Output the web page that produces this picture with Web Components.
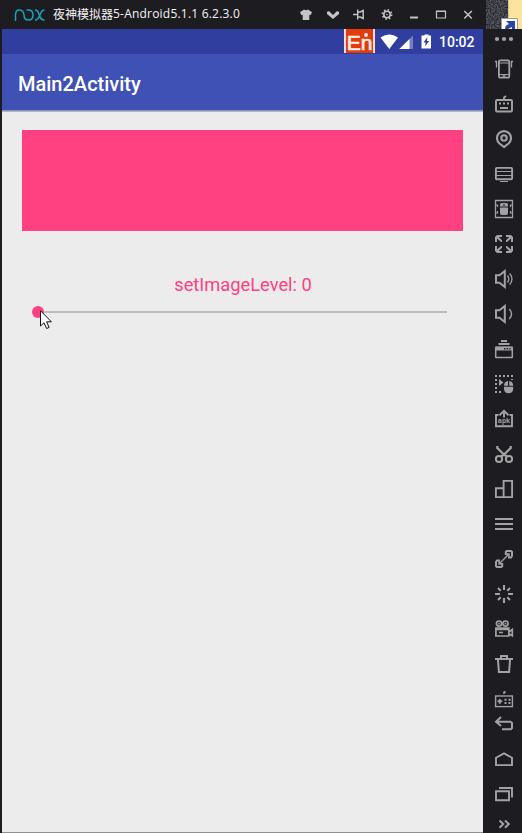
<!DOCTYPE html>
<html lang="zh"><head><meta charset="utf-8"><title>Main2Activity</title>
<style>html,body{margin:0;height:100%;background:#1d1c21;overflow:hidden}</style></head>
<body><emulator-window></emulator-window>
<script>
const define=(name,html)=>customElements.define(name,class extends HTMLElement{
  constructor(){super();this.attachShadow({mode:'open'}).innerHTML=html}
});

const ICONS={
dots:'<g class="f"><circle cx="3" cy="10" r="2.1"/><circle cx="10" cy="10" r="2.1"/><circle cx="17" cy="10" r="2.1"/></g>',
shake:'<rect x="4.900" y="1.300" width="10.400" height="17.400" rx="1.500" stroke-width="1.800"/><path d="M5 4h10M5 15.500h10" stroke-width="1"/><path d="M8.500 17h3M1 2.500h1.500v6M19 2.500h-1.500v6" stroke-width="1.300"/>',
keyboard:'<rect x="2" y="6" width="16" height="11.500" rx="1" stroke-width="1.900"/><path d="M10 6V3.500l2-1.500M5 9.500h2M9 9.500h2M13 9.500h2M6 14h8" stroke-width="1.800"/>',
pin:'<path d="M10 18 5.500 14.500A7 7 0 1 1 14.500 14.500Z" stroke-width="2.200"/><circle cx="10" cy="9" r="2.700" stroke-width="2.100"/>',
monitor:'<rect x="1.900" y="3.900" width="16.200" height="11.400" rx="1" stroke-width="1.900"/><path d="M2 7.500h16M2 11.500h16M6 17.500h8" stroke-width="1.200"/>',
mouse:'<path d="M1.500 1.500h17v17h-17z" stroke-width="1.300"/><path class="f" d="M7.500 4h5q1.500 0 1.500 2v1.500H6V6q0-2 1.500-2zM6 8.500h8V14q0 2-2 2H8q-2 0-2-2z"/><path d="M9 6h2" stroke="#1d1c21" stroke-width="1"/><path d="M2 6h1.500v2M2 14h1.500v-2M18 6h-1.500v2M18 14h-1.500v-2" stroke-width="1.200"/>',
full:'<path class="f" d="M3 1h5v2H4.800L8 6.200V8L7 8 3 4.500V8H1V3zM17 1h-5v2h3.200L12 6.200V8h1l4-3.500V8h2V3zM3 19h5v-2H4.800L8 13.800V12H7l-4 3.500V12H1v5zM17 19h-5v-2h3.200L12 13.800V12h1l4 3.500V12h2v5z"/>',
loud:'<path d="M2 6.200h3.500L10.800 2v16l-5.300-4.200H2z" stroke-width="2"/><path d="M13.500 6.500q2.500 3.500 0 7M15.700 4.500q4.500 5.500 0 11" stroke-width="1.300"/>',
quiet:'<path d="M2 6.200h3.500L10.800 2v16l-5.300-4.200H2z" stroke-width="2"/><path d="M15.300 5q4.500 5 0 10" stroke-width="1.400"/>',
windows:'<path d="M7 2h6M4.500 5h11" stroke-width="1.900"/><rect x="1.700" y="8.200" width="16.600" height="10.300" rx=".5" stroke-width="1.500"/><path class="f" d="M1.500 7.700h17v3.800h-17z"/><path d="M10 9.700h7" stroke="#1d1c21" stroke-width="1.400" stroke-dasharray="1.400 1.200"/>',
record:'<path d="M1 2h18M2 5v14M1 18h8M18 5v1" stroke-width="2" stroke-dasharray="2 2"/><path class="f" d="M5 5l4.500 3.500L5 12zM14 7v4.700h-4q0-4 4-4.700zM15.200 7q4 .7 4 4.700h-4zM10 12.700h9.200v2.300q-.5 4.300-4.600 4.300T10 15z"/>',
apk:'<path d="M4.500 6H2v11.300h16V6h-2.500M10 8.500V2M5.500 6.200 10 1.800l4.500 4.400" stroke-width="1.900"/><text x="3.700" y="14" textLength="12.600" lengthAdjust="spacingAndGlyphs">apk</text>',
cut:'<path d="M3.300 2v2L10 10.500 16.700 4V2M10 10.500l-3.300 2.300M10 10.500l3.300 2.300" stroke-width="2.300"/><circle cx="5" cy="15" r="3.100" stroke-width="2"/><circle cx="15" cy="15" r="3.100" stroke-width="2"/>',
rotate:'<path d="M9.600 1.900h8.500v16.200H9.600zM9.600 9.200H1.900v8.900h7.700" stroke-width="1.900"/>',
menu:'<path d="M1 5h18M1 10h18M1 15h18" stroke-width="1.900"/>',
link:'<path d="M11.800 6V2.800L12.800 2H17l1 1v4l-1 1.500h-3M8.200 14v3.200l-1 .8H3l-1-1v-4l1-1.500h3" stroke-width="2"/><path d="M5 15 15 5M5 12v3h3M12 5h3v3" stroke-width="1.400"/>',
burst:'<path d="M10 1v5M10 14v5M1 10h5M14 10h5M4 4l2.700 2.700M13.300 13.300 16 16M4 16l2.700-2.700M13.300 6.700 16 4" stroke-width="2.100"/>',
video:'<circle cx="5" cy="4.600" r="2.600"/><circle cx="11.500" cy="4.600" r="2.600"/><path class="f" d="M4.200 3.800h1.600v1.600H4.200zM10.700 3.800h1.600v1.600h-1.600z"/><path d="M1.900 9h12.900v8H1.900zM2 10.300h12.500M5 13.500h4M14.800 13l3.500-2.500v6.300l-3.500-2" stroke-width="1.700"/>',
trash:'<path d="M1 4.900h18M7 4V1.900h6V4M4 6l.9 12h10.200L16 6" stroke-width="2"/>',
gamepad:'<rect x="1.600" y="7" width="16.800" height="10.600" stroke-width="1.400"/><path d="M10 4.800V3.500l1.500-1M3.500 12.200h4.700M5.800 10v4.700M10.500 10.700h2M14.500 10.700h2M10.500 14h2M14.500 14h2" stroke-width="1.900"/>',
back:'<path d="M7 4 2 8.800 7 13M2 8.800h14.500L18 10v5l-1.200 1.200H8" stroke-width="2"/>',
home:'<path d="M2 16.100V8.700L10 4.300l8 4.400v7.400z" stroke-width="1.900"/>',
recent:'<path d="M2 7.300h13v8.900H2zM5 4h13v9.500" stroke-width="1.900"/>',
more:'<path d="m5.500 6.500 3.800 3.500-3.800 3.700M11 6.500l3.800 3.500-3.800 3.700" stroke-width="2"/>',
shirt:'<path class="f" d="M8 4.500q2 1.500 4 0l4 2.800-1.500 3-1.200-.5V15H6.700V9.800l-1.200.5L4 7.300z"/>',
down:'<path class="f" d="M4 7q1-1 2.500-.5L10 10l3.500-3.500Q15 6 16 7v2l-6 5-6-5z"/>',
tack:'<path d="M3 9.500H7M7.700 4.500v10M7.700 7h2.500l3-1.500v8l-3-1.500H7.700" stroke-width="1.400"/>',
gear:'<circle cx="10" cy="9.500" r="3.200"/><circle cx="10" cy="9.500" r="4.600" stroke-width="1.700" stroke-dasharray="1.500 2.113"/><circle class="f" cx="10" cy="9.500" r=".8"/>',
min:'<path d="M6 12.500h8" stroke-width="2"/>',
max:'<path d="M5.500 6h9v7h-9zM5 6.500h10" stroke-width="1.200"/>',
close:'<path d="m6.300 6 7.500 7.500M13.800 6l-7.500 7.500" stroke-width="1.500"/>'
};
customElements.define('ui-icon',class extends HTMLElement{
  constructor(){super();this.attachShadow({mode:'open'})}
  connectedCallback(){this.shadowRoot.innerHTML=`<style>:host{display:block;width:20px;height:20px;flex:none}
  svg{display:block;fill:none;stroke:currentColor;stroke-width:1.6}.f{fill:currentColor;stroke:none}
  text{fill:currentColor;stroke:none;font:bold 8px "Liberation Mono",monospace}</style>
  <svg width="20" height="20" viewBox="0 0 20 20">${ICONS[this.getAttribute('name')]}</svg>`}
});

define('title-bar',`<style>:host{display:flex;align-items:center;height:29px;width:486px;box-sizing:border-box;padding-left:14px;background:#1d1c21;color:#c4c4c6}
.logo{flex:none;width:32px;height:14px;margin-right:7px}
.name{color:#f4f4f4;font:12px/20px "Open Sans","Noto Sans CJK SC",sans-serif;white-space:nowrap;width:243px;display:flex;align-items:center;margin-top:-1px}
.cn{font-family:"Noto Sans CJK SC",sans-serif}.en{letter-spacing:.21px}
.tools{display:flex;gap:7px}</style>
<svg class="logo" viewBox="0 0 32 14" fill="none" stroke="#13a5bd" stroke-width="1.500"><path d="M1.500 13V7Q1.500 2 5.500 2T10 7q0 5 4.500 5T19 7 14.500 2h-2M21 2q2.500 0 3.300 2.500L26 9q1 3 4.500 3M30.500 2Q28 2 27 4.500L25 9q-1.300 3-4 3"/></svg>
<div class="name"><span class="cn">夜神模拟器</span><span class="en">5-Android5.1.1 6.2.3.0</span></div>
<div class="tools"><ui-icon name="shirt"></ui-icon><ui-icon name="down"></ui-icon><ui-icon name="tack"></ui-icon><ui-icon name="gear"></ui-icon><ui-icon name="min"></ui-icon><ui-icon name="max"></ui-icon><ui-icon name="close"></ui-icon></div>`);

define('desktop-corner',`<style>:host{display:block;width:36px;height:29px}svg{display:block}</style>
<svg width="36" height="29"><defs><filter id="n" x="0" y="0" width="1" height="1" color-interpolation-filters="sRGB"><feTurbulence type="fractalNoise" baseFrequency=".7" numOctaves="2" seed="4"/><feColorMatrix values=".5 0 0 0 0 .5 0 0 0 0 .5 0 0 0 .03 0 0 0 0 1"/></filter></defs>
<path filter="url(#n)" d="M0 0h36v29H0z"/><path fill="#fbe3a0" d="M22 0h14v29H22z"/><path fill="#e4c474" d="M22 0h1v18h-1z"/><path fill="#fff" stroke="#9a9aa0" d="M15.500 18.500h16V30h-16z"/><path fill="#2c45a5" d="M20 21h9v8h-3v-2l-4 2h-3q0-4 4-5z"/></svg>`);

define('status-bar',`<style>:host{display:flex;height:25px;background:#303f9f;color:#fff;justify-content:flex-end;align-items:center;padding-right:8px}
.ime{width:27px;height:24px;border:solid #f3dcd6;border-width:0 2px;background:#e23c0a;font:21px/28px "Liberation Sans",sans-serif;-webkit-text-stroke:.7px #f6ece8;color:#f6ece8;text-align:center;align-self:flex-start;overflow:hidden;margin-right:2px;position:relative}
.ime i{position:absolute;left:18px;top:4px;width:4px;height:4px;border-radius:2px;background:#f6ece8}
svg{display:block}time{font:500 14px/25px Roboto,sans-serif;margin-left:6px;width:36px;white-space:nowrap;padding-top:1px}</style>
<div class="ime">En<i></i></div><svg width="56" height="25" viewBox="0 0 56 25"><path fill="#fff" d="M3.500 8.500q8.700-6 17.500 0L12.300 20z"/><path fill="#7480c2" d="M36 6.500V20H22z"/><path fill="#fff" d="M32.500 10v10H22.500z"/><path fill="#fff" d="M47.500 5.500h4V6.500H54v13h-9.500v-13h3z"/><path fill="#303f9f" d="m50.500 8-4 5.500h2.300l-.8 4 4.200-5.500h-2.300z"/></svg><time>10:02</time>`);

define('app-bar',`<style>:host{display:flex;align-items:center;height:58px;padding:3px 16px 0;box-sizing:border-box;background:#3f51b5;color:#fff;font:500 20px/24px Roboto,sans-serif;border-bottom:1px solid #b4b5bd;box-shadow:inset 0 -1px #8a93c4}</style><slot></slot>`);

define('level-slider',`<style>:host{display:flex;align-items:center;height:12px;margin:0 16px 0 10px;position:relative}
i{width:12px;height:12px;border-radius:50%;background:#ff4081;flex:none}b{height:2px;background:#bbb;flex:1}
svg{position:absolute;left:8px;top:4px}</style><i></i><b></b>
<svg width="14" height="21" viewBox="0 0 14 21"><path d="M.5.700v15.300l3.500-3.200 2.600 5.700 2.500-1.100-2.500-5.600h4.800z" fill="#fff" stroke="#111"/></svg>`);

define('phone-screen',`<style>:host{display:flex;flex-direction:column;background:#ececec;margin-left:2px;border-bottom:1px solid #909090;box-sizing:border-box}
main{padding:18px 20px 0;display:flex;flex-direction:column}.image{height:101px;background:#ff4081}
.label{color:#ff4081;font:18.300px/24px Roboto,sans-serif;text-align:center;margin:42px 0 9px;padding-left:1px}</style>
<status-bar></status-bar><app-bar>Main2Activity</app-bar><main><div class="image"></div><div class="label">setImageLevel: 0</div><level-slider></level-slider></main>`);

const tools='shake keyboard pin monitor mouse full loud quiet windows record apk cut rotate menu link burst video trash gamepad'.split(' ');
define('tool-rail',`<style>:host{display:flex;flex-direction:column;align-items:center;background:#1d1c21;color:#a2a2a4;overflow:hidden;padding-left:3px}
.list{display:flex;flex-direction:column;gap:15px;margin:10px 0 4px}.nav{display:flex;flex-direction:column;gap:15px;margin:16px 0 10px}</style>
<ui-icon name="dots"></ui-icon><div class="list">${tools.map(n=>`<ui-icon name="${n}"></ui-icon>`).join('')}</div>
<ui-icon name="back"></ui-icon><div class="nav"><ui-icon name="home"></ui-icon><ui-icon name="recent"></ui-icon></div><ui-icon name="more"></ui-icon>`);

define('emulator-window',`<style>:host{display:grid;width:522px;height:833px;grid-template-rows:29px 804px;overflow:hidden;background:#1d1c21}
.top{display:flex}.body{display:grid;grid-template-columns:483px 39px;min-height:0}</style>
<div class="top"><title-bar></title-bar><desktop-corner></desktop-corner></div><div class="body"><phone-screen></phone-screen><tool-rail></tool-rail></div>`);
</script></body></html>
